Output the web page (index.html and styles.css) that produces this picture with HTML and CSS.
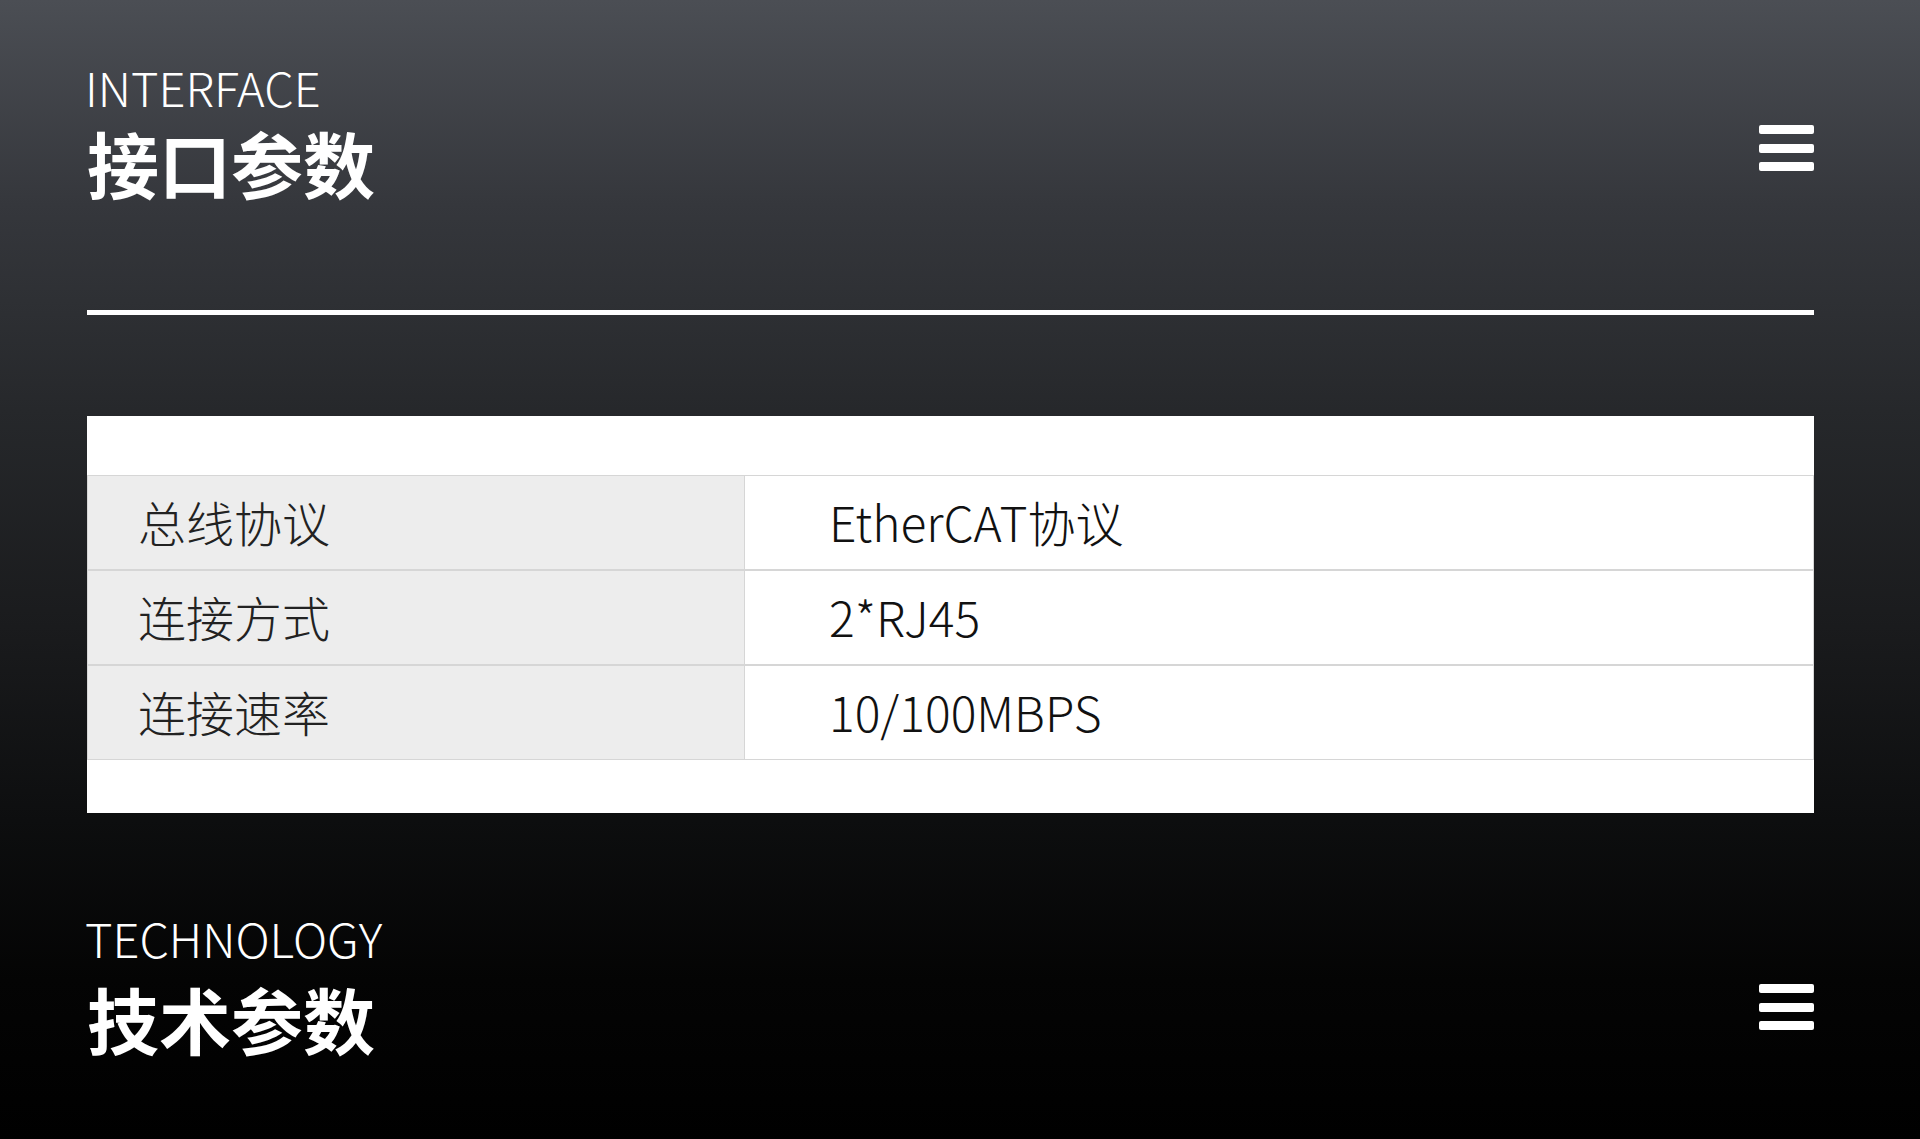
FILE: index.html
```html
<!DOCTYPE html>
<html lang="zh-CN">
<head>
<meta charset="utf-8">
<title>接口参数</title>
<link rel="stylesheet" href="styles.css">
</head>
<body>
<div class="page">
  <header class="section-head">
    <div class="titles">
      <div class="en">INTERFACE</div>
      <h2 class="zh">接口参数</h2>
    </div>
    <div class="burger"><span></span><span></span><span></span></div>
  </header>

  <div class="rule"></div>

  <div class="card">
    <table class="spec">
      <tr><td class="label">总线协议</td><td class="value">EtherCAT协议</td></tr>
      <tr><td class="label">连接方式</td><td class="value">2*RJ45</td></tr>
      <tr><td class="label">连接速率</td><td class="value">10/100MBPS</td></tr>
    </table>
  </div>

  <header class="section-head second">
    <div class="titles">
      <div class="en">TECHNOLOGY</div>
      <h2 class="zh">技术参数</h2>
    </div>
    <div class="burger"><span></span><span></span><span></span></div>
  </header>
</div>
</body>
</html>
```

FILE: styles.css
```css
html, body {
  margin: 0;
  padding: 0;
}
body {
  width: 1920px;
  height: 1139px;
  overflow: hidden;
  background: linear-gradient(180deg, #4b4e54 0%, #35373c 18%, #26282b 36%, #1a1b1d 55%, #0d0e0f 72%, #040404 86%, #000 100%);
  font-family: "Noto Sans CJK SC", "Noto Sans", sans-serif;
  color: #fff;
}
.page {
  padding: 63px 106px 0 87px;
}
.section-head {
  display: flex;
  justify-content: space-between;
  align-items: flex-start;
}
.titles {
  display: flex;
  flex-direction: column;
  gap: 16px;
}
.en {
  font-size: 47px;
  line-height: 47px;
  font-weight: 200;
  letter-spacing: 0;
  margin-left: -2px;
}
.zh {
  margin: 0;
  font-size: 72px;
  line-height: 72px;
  font-weight: 700;
}
.burger {
  margin-top: 62px;
  width: 55px;
  display: flex;
  flex-direction: column;
  gap: 9.5px;
}
.burger span {
  display: block;
  height: 9px;
  background: #fff;
  border-radius: 2px;
}
.rule {
  margin-top: 112px;
  height: 5px;
  background: #fff;
}
.card {
  margin-top: 101px;
  background: #fff;
  padding: 59px 0 53px;
}
.spec {
  width: 100%;
  border-collapse: collapse;
  color: #111;
  font-size: 48px;
  font-weight: 200;
}
.spec td {
  height: 89px;
  padding: 0 0 4px;
  border: 1px solid #d6d6d6;
  vertical-align: middle;
  line-height: 1;
}
.spec tr + tr td {
  border-top-width: 2px;
}
.spec .label {
  width: 657px;
  box-sizing: border-box;
  background: #ededed;
  padding-left: 50px;
  color: #222;
}
.spec .value {
  padding-left: 84px;
  background: #fff;
}
.second {
  margin-top: 101px;
}
.second .titles {
  gap: 21px;
}
.second .burger {
  margin-top: 70px;
}
```
